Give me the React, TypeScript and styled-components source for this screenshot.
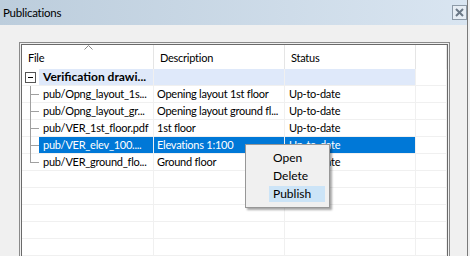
import React from 'react';
import styled, { createGlobalStyle } from 'styled-components';

const GlobalStyle = createGlobalStyle`
  html, body {
    margin: 0;
    padding: 0;
    background: #f0f0f0;
  }
  body {
    font-family: Lato, "Noto Sans", sans-serif;
    font-size: 11px;
    letter-spacing: -0.25px;
    color: #000;
  }
`;

const COLS = '132px 131px 131px 1fr';

const Window = styled.div`
  width: 468px;
  height: 256px;
  box-sizing: border-box;
  border-right: 1px solid #7a7a7a;
  background: #f0f0f0;
  overflow: hidden;
  position: relative;
`;

const TitleBar = styled.div`
  height: 25px;
  display: flex;
  align-items: center;
  justify-content: space-between;
  padding-left: 3px;
  background: linear-gradient(to right, #bccddc, #d9e5f1);
`;

const Title = styled.span`
  font-size: 11.5px;
  line-height: 16px;
`;

const CloseButton = styled.div`
  width: 15px;
  height: 15px;
  box-sizing: border-box;
  border: 1px solid #8d9aa7;
  background: #e6edf4;
  display: flex;
  align-items: center;
  justify-content: center;
`;

const Body = styled.div`
  padding: 17px 17px 0 19px;
`;

const ListFrame = styled.div`
  border: 1px solid #8a8a8a;
  padding: 1px;
  background: #f0f0f0;
`;

const ListInner = styled.div`
  border: 1px solid #6a6a6a;
  background: #fff;
  height: 260px;
`;

const Row = styled.div`
  display: grid;
  grid-template-columns: ${COLS};
`;

const HeaderCell = styled.div`
  position: relative;
  height: 24px;
  box-sizing: border-box;
  border-right: 1px solid #e5e5e5;
  padding-left: 6px;
  display: flex;
  align-items: center;
`;

const SortArrow = styled.svg`
  position: absolute;
  top: 0;
  left: 62px;
`;

type Tone = 'plain' | 'group' | 'selected';

const toneBg = (t: Tone) => (t === 'group' ? '#dfe9fa' : t === 'selected' ? '#0078d7' : '#fff');
const toneFg = (t: Tone) => (t === 'selected' ? '#fff' : '#000');

const Cell = styled.div<{ $tone: Tone; $pad?: number }>`
  height: 17px;
  box-sizing: border-box;
  border-right: 1px solid #f0f0f0;
  border-bottom: 1px solid #f0f0f0;
  background: ${({ $tone }) => toneBg($tone)};
  color: ${({ $tone }) => toneFg($tone)};
  padding-left: ${({ $pad }) => $pad ?? 3}px;
  line-height: 16px;
  white-space: nowrap;
  overflow: hidden;
`;

const FileCell = styled.div`
  position: relative;
  height: 17px;
  box-sizing: border-box;
  border-right: 1px solid #f0f0f0;
  border-bottom: 1px solid #f0f0f0;
  display: flex;
`;

const Guide = styled.span<{ $last?: boolean }>`
  position: relative;
  flex: 0 0 17px;
  &::before {
    content: '';
    position: absolute;
    left: 8px;
    top: 0;
    height: ${({ $last }) => ($last ? '9px' : '17px')};
    border-left: 1px solid #a0a0a0;
  }
  &::after {
    content: '';
    position: absolute;
    left: 9px;
    top: 8px;
    width: 8px;
    border-top: 1px solid #a0a0a0;
  }
`;

const ExpandBox = styled.span`
  flex: 0 0 17px;
  display: flex;
  align-items: center;
  padding-left: 3px;
  box-sizing: border-box;
`;

const BoxGlyph = styled.span`
  position: relative;
  width: 11px;
  height: 11px;
  box-sizing: border-box;
  border: 1px solid #555;
  background: #fff;
  &::after {
    content: '';
    position: absolute;
    left: 2px;
    top: 4px;
    width: 5px;
    border-top: 1px solid #000;
  }
`;

const FileLabel = styled.span<{ $tone: Tone; $bold?: boolean }>`
  flex: 1;
  padding-left: 4px;
  background: ${({ $tone }) => toneBg($tone)};
  color: ${({ $tone }) => toneFg($tone)};
  font-weight: ${({ $bold }) => ($bold ? 'bold' : 'normal')};
  font-size: ${({ $bold }) => ($bold ? '12px' : 'inherit')};
  letter-spacing: ${({ $bold }) => ($bold ? '0' : 'inherit')};
  line-height: 16px;
  white-space: nowrap;
  overflow: hidden;
`;

const Menu = styled.div`
  position: absolute;
  left: 245px;
  top: 144px;
  width: 85px;
  height: 64px;
  box-sizing: border-box;
  padding-top: 3px;
  background: #f0f0f0;
  border: 1px solid #979797;
  box-shadow: 2px 2px 2px rgba(0, 0, 0, 0.35);
  font-size: 12px;
  letter-spacing: 0;
`;

const MenuItem = styled.div<{ $hot?: boolean }>`
  height: 16px;
  margin: 2px 4px 2px 23px;
  padding-left: 4px;
  line-height: 16px;
  background: ${({ $hot }) => ($hot ? '#cce4f7' : 'transparent')};
`;

const files = [
  { file: 'pub/Opng_layout_1s...', desc: 'Opening layout 1st floor', status: 'Up-to-date' },
  { file: 'pub/Opng_layout_gr...', desc: 'Opening layout ground fl...', status: 'Up-to-date' },
  { file: 'pub/VER_1st_floor.pdf', desc: '1st floor', status: 'Up-to-date' },
  { file: 'pub/VER_elev_100....', desc: 'Elevations 1:100', status: 'Up-to-date', selected: true },
  { file: 'pub/VER_ground_flo...', desc: 'Ground floor', status: 'Up-to-date' },
];

const App: React.FC = () => {
  return (
    <Window>
      <GlobalStyle />
      <TitleBar>
        <Title>Publications</Title>
        <CloseButton>
          <svg width="9" height="9" viewBox="0 0 9 9">
            <path d="M1 1 L8 8 M8 1 L1 8" stroke="#6b7886" strokeWidth="2" />
          </svg>
        </CloseButton>
      </TitleBar>
      <Body>
        <ListFrame>
          <ListInner>
            <Row>
              <HeaderCell>
                File
                <SortArrow width="9" height="5" viewBox="0 0 9 5">
                  <polyline points="0.5,4.5 4.5,0.5 8.5,4.5" fill="none" stroke="#8a8a8a" />
                </SortArrow>
              </HeaderCell>
              <HeaderCell>Description</HeaderCell>
              <HeaderCell>Status</HeaderCell>
              <HeaderCell />
            </Row>

            <Row>
              <FileCell>
                <ExpandBox>
                  <BoxGlyph />
                </ExpandBox>
                <FileLabel $tone="group" $bold>Verification drawi...</FileLabel>
              </FileCell>
              <Cell $tone="group" />
              <Cell $tone="group" />
              <Cell $tone="plain" />
            </Row>

            {files.map((f, i) => {
              const tone: Tone = f.selected ? 'selected' : 'plain';
              return (
                <Row key={f.file}>
                  <FileCell>
                    <Guide $last={i === files.length - 1} />
                    <FileLabel $tone={tone}>{f.file}</FileLabel>
                  </FileCell>
                  <Cell $tone={tone}>{f.desc}</Cell>
                  <Cell $tone={tone} $pad={4}>{f.status}</Cell>
                  <Cell $tone="plain" />
                </Row>
              );
            })}

            {[0, 1, 2, 3, 4, 5].map((n) => (
              <Row key={n}>
                <Cell $tone="plain" />
                <Cell $tone="plain" />
                <Cell $tone="plain" />
                <Cell $tone="plain" />
              </Row>
            ))}
          </ListInner>
        </ListFrame>
      </Body>
      <Menu>
        <MenuItem>Open</MenuItem>
        <MenuItem>Delete</MenuItem>
        <MenuItem $hot>Publish</MenuItem>
      </Menu>
    </Window>
  );
};

export default App;
